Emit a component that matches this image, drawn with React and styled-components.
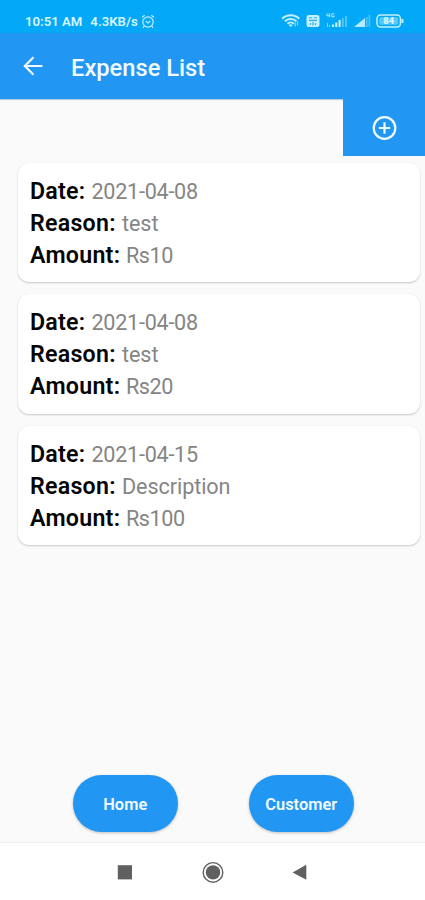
import React from "react";
import styled, { createGlobalStyle } from "styled-components";

const expenses = [
  { id: 1, date: "2021-04-08", reason: "test", amount: 10 },
  { id: 2, date: "2021-04-08", reason: "test", amount: 20 },
  { id: 3, date: "2021-04-15", reason: "Description", amount: 100 },
];

function AlarmIcon() {
  return (
    <svg width="14" height="15" viewBox="0 0 14 15" fill="none" stroke="#c4f0ff" strokeWidth="1.2">
      <circle cx="7" cy="8" r="5.2" />
      <path d="M1 3.4 3.6 1.2M13 3.4 10.4 1.2M4.8 7.2 7 9l2.2-1.8M3.2 12.2 2 13.8M10.8 12.2l1.2 1.6" />
    </svg>
  );
}

function StatusIcons() {
  return (
    <svg width="126" height="18" viewBox="0 0 126 18" fill="none">
      <g stroke="#c4f0ff" strokeWidth="2">
        <path d="M1.2 6.7a12.2 12.2 0 0 1 17 0" />
        <path d="M3.9 9.3a8.3 8.3 0 0 1 11.6 0" />
        <path d="M6.5 11.7a4.6 4.6 0 0 1 6.4 0" />
      </g>
      <path d="m7.7 13.1 2 2 2-2a3 3 0 0 0-4 0z" fill="#c4f0ff" />
      <path d="M14.2 10.5v4M16.6 9.5v4" stroke="#a5e5ff" />
      <rect x="25.5" y="3" width="13" height="12" rx="2.5" fill="#c4f0ff" />
      <path d="M28 5.7h3M33 5.7h3M28 8.4h8M29.5 11v2M32 10v3.5M34.5 11v2" stroke="#20adf2" strokeWidth="1.1" />
      <path d="M46 1.4v2.4h3M48.3 1.2v4M53.2 1.8h-2.4v3h2.4V3.5" stroke="#b5eaff" />
      <path d="M46.5 11v4M48.5 13v2" stroke="#82d9ff" />
      <path d="M52 12.5V15M55.3 10.5V15M58.6 8V15" stroke="#c4f0ff" strokeWidth="2.1" />
      <path d="M61.8 6v9M65 4v11" stroke="#55c8fd" strokeWidth="1.8" />
      <path d="M73 15 84 6v9z" fill="#b5eaff" />
      <path d="M85.7 5v10M88.4 3v12" stroke="#48c3fc" strokeWidth="1.7" />
      <rect x="96" y="3" width="23.4" height="12" rx="3.5" stroke="#c4f0ff" strokeWidth="1.5" />
      <rect x="98.2" y="5.2" width="19" height="7.6" rx="1.5" fill="#55cafa" />
      <path d="M121.4 7v4" stroke="#c4f0ff" strokeWidth="2" />
      <BatteryText x="107.7" y="12.3" textAnchor="middle">84</BatteryText>
    </svg>
  );
}

function BackIcon() {
  return (
    <svg width="20" height="20" viewBox="0 0 20 20" fill="none" stroke="#f2fbff" strokeWidth="2.1">
      <path d="M19.4 10H2M10.5 1.3 1.8 10l8.7 8.7" />
    </svg>
  );
}

function AddIcon() {
  return (
    <svg width="26" height="26" viewBox="0 0 26 26" fill="none" stroke="#f0fbff" strokeWidth="2.2">
      <circle cx="13.5" cy="13" r="10.8" />
      <path d="M13.5 7.3v11.4M7.8 13h11.4" />
    </svg>
  );
}

function ExpenseCard({ expense }) {
  return (
    <Card>
      <Line>
        <Label $width={55.5}>Date:</Label>
        <Value $tracking={-0.27}>{expense.date}</Value>
      </Line>
      <Line>
        <Label $width={86}>Reason:</Label>
        <Value>{expense.reason}</Value>
      </Line>
      <Line>
        <Label $width={90}>Amount:</Label>
        <Value $tracking={-0.45}>{`Rs${expense.amount}`}</Value>
      </Line>
    </Card>
  );
}

function App() {
  return (
    <Screen>
      <GlobalStyle />
      <StatusBar>
        <StatusText>
          <span>10:51 AM</span>
          <span>4.3KB/s</span>
          <AlarmIcon />
        </StatusText>
        <StatusIcons />
      </StatusBar>
      <AppBar>
        <BackIcon />
        <Title>Expense List</Title>
      </AppBar>
      <AddButton aria-label="Add expense">
        <AddIcon />
      </AddButton>
      <List>
        {expenses.map((expense) => (
          <ExpenseCard key={expense.id} expense={expense} />
        ))}
      </List>
      <Actions>
        <PillButton>Home</PillButton>
        <PillButton>Customer</PillButton>
      </Actions>
      <SystemNav>
        <svg width="425" height="57" viewBox="0 0 425 57" fill="#606060">
          <rect x="117.8" y="22.2" width="14.2" height="14.2" />
          <circle cx="213" cy="29.4" r="7.2" />
          <circle cx="213" cy="29.4" r="9.8" fill="none" stroke="#606060" strokeWidth="1.4" />
          <path d="M292.6 29.4 306.3 21.8v15z" />
        </svg>
      </SystemNav>
    </Screen>
  );
}

const GlobalStyle = createGlobalStyle`
  * {
    box-sizing: border-box;
  }

  body {
    margin: 0;
    background: #fafafa;
    font-family: Roboto, "Liberation Sans", sans-serif;
  }

  svg {
    display: block;
    flex: none;
  }
`;

const Screen = styled.div`
  display: flex;
  flex-direction: column;
  width: 425px;
  height: 900px;
  overflow: hidden;
  background: #fafafa;
`;

const StatusBar = styled.div`
  display: flex;
  flex: none;
  justify-content: space-between;
  align-items: center;
  height: 33px;
  padding: 9px 18px 0 25px;
  background: #03a9f7;
`;

const StatusText = styled.div`
  display: flex;
  align-items: center;
  color: #d8f5ff;
  font-size: 13.2px;
  font-weight: 600;
  white-space: nowrap;

  span {
    margin-right: 8px;
  }

  span + span {
    margin-right: 3px;
  }
`;

const BatteryText = styled.text`
  fill: #e5faff;
  font-size: 9.4px;
  font-weight: 700;
`;

const AppBar = styled.header`
  display: flex;
  flex: none;
  align-items: center;
  height: 66px;
  padding-left: 23px;
  background: #2196f3;
  box-shadow: 0 1px 1px rgba(33, 100, 160, 0.3);
`;

const Title = styled.h1`
  margin: 3px 0 0 28px;
  color: #f2fbff;
  font-size: 23.7px;
  font-weight: 500;
  line-height: 30px;
`;

const AddButton = styled.button`
  display: flex;
  flex: none;
  align-self: flex-end;
  align-items: center;
  justify-content: center;
  width: 82px;
  height: 57px;
  padding: 0;
  border: 0;
  background: #2196f3;
`;

const List = styled.main`
  display: flex;
  flex: 1;
  flex-direction: column;
  gap: 12px;
  padding: 6.5px 5px 0 17.5px;
`;

const Card = styled.section`
  height: 119.5px;
  padding: 13px 12.5px;
  border-radius: 11px;
  background: #fff;
  box-shadow: 0 1px 2px rgba(0, 0, 0, 0.2), 0 0 1px rgba(0, 0, 0, 0.06);
`;

const Line = styled.div`
  display: flex;
  gap: 6px;
  height: 32px;
  line-height: 32px;
  white-space: nowrap;
`;

const Label = styled.span`
  flex: none;
  width: ${(props) => props.$width}px;
  color: #050505;
  font-size: 23.2px;
  font-weight: 600;
  line-height: 31px;
  letter-spacing: 0.25px;
`;

const Value = styled.span`
  color: #858585;
  font-size: 21.6px;
  letter-spacing: ${(props) => props.$tracking || -0.08}px;
`;

const Actions = styled.div`
  display: flex;
  flex: none;
  gap: 71.5px;
  height: 68px;
  padding-left: 73px;
`;

const PillButton = styled.button`
  width: 104.5px;
  height: 57px;
  padding: 1px 0 0;
  border: 0;
  border-radius: 29px;
  background: #2196f3;
  color: #f2fbff;
  font-family: inherit;
  font-size: 16.4px;
  font-weight: 600;
  box-shadow: 0 1px 3px rgba(0, 0, 0, 0.24);
`;

const SystemNav = styled.nav`
  flex: none;
  height: 57px;
  background: #fff;
  box-shadow: 0 -1px 1px rgba(0, 0, 0, 0.04);
`;

export default App;
